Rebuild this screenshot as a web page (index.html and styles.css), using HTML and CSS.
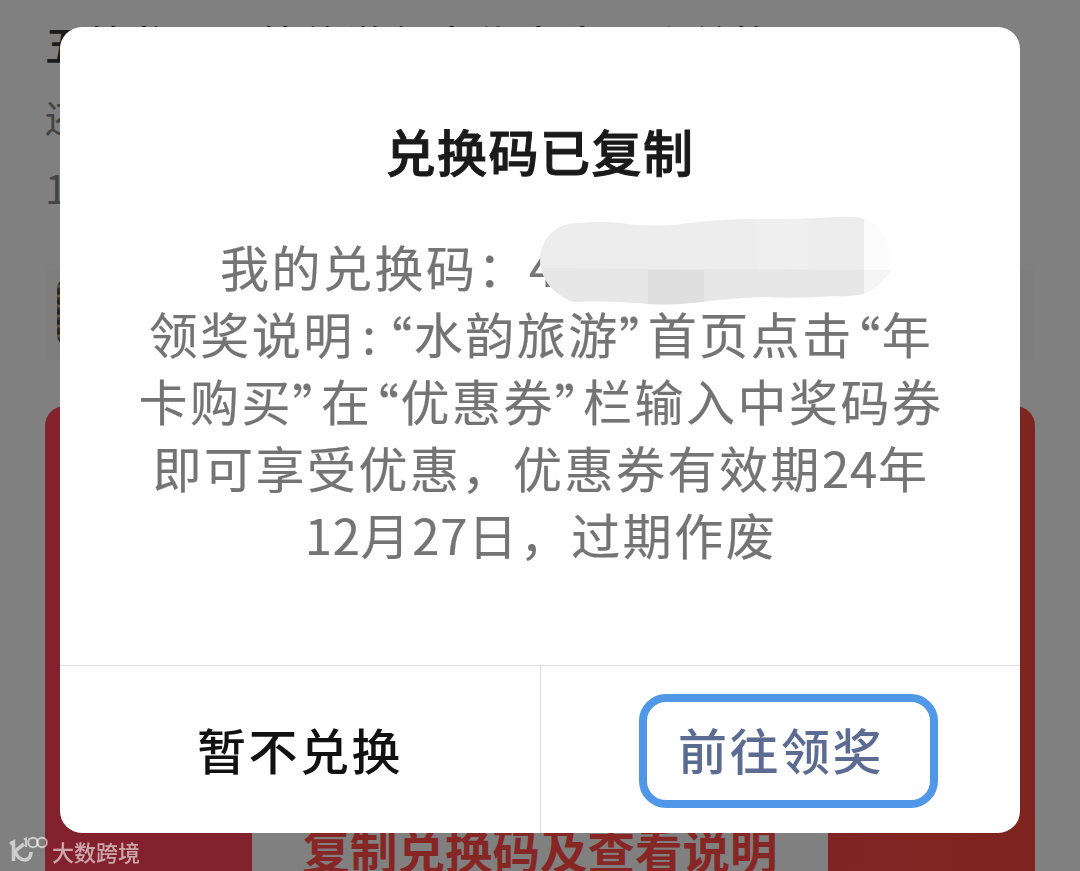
FILE: index.html
```html
<!DOCTYPE html>
<html lang="zh-CN">
<head>
  <meta charset="UTF-8" />
  <meta name="viewport" content="width=device-width, initial-scale=1.0"/>
  <title>兑换码已复制</title>
  <link rel="stylesheet" href="styles.css">
</head>
<body>
  <div class="page">
    <h1 class="prize-title">五等奖·八等旅游年卡优惠券一张兑换</h1>
    <p class="prize-info">还</p>
    <p class="prize-info count">1</p>
    <div class="sponsor"><span class="avatar"></span></div>
    <div class="banner">
      <div class="banner-panel"><span class="copy-text">复制兑换码及查看说明</span></div>
    </div>
  </div>

  <!-- Dialog -->
  <div class="overlay">
    <div class="modal">
      <div class="modal-body">
        <h2>兑换码已复制</h2>
        <div class="desc">
          <p class="code-line">我的兑换码：<span class="code">4</span>
            <svg class="smudge" width="360" height="95" viewBox="535 213 360 95">
              <path fill="#fcfcfc" d="M864 219Q884 226 888 246L890 270L864 272Z"/>
              <path fill="#f5f5f5" d="M864 270H891Q881 287 864 294Z"/>
              <path fill="#ededed" d="M540 262C540 240 554 222 580 223Q600 221 620 223Q650 227 675 225Q705 220 750 219Q790 220 820 218Q855 215 864 219V270H541Z"/>
              <path fill="#efefef" d="M758 219.500L808 218.500V270H758Z"/>
              <path fill="#e7e7e7" d="M541 268L864 270V294Q850 297 835 296Q800 299 760 297Q725 299 700 302Q665 306 635 303Q600 300 573 302C556 295 544 284 541 268Z"/>
              <path fill="#dfdfdf" d="M648 270H704V301.500Q670 306 648 303.500Z"/>
            </svg>
          </p>
          <p>领奖说明<span class="colon">:</span><span class="q left">“</span>水韵旅游<span class="q">”</span>首页点击<span class="q left">“</span>年</p>
          <p>卡购买<span class="q">”</span>在<span class="q left">“</span>优惠券<span class="q">”</span>栏输入中奖码券</p>
          <p>即可享受优惠，优惠券有效期<span class="num">24</span>年</p>
          <p><span class="num">12</span>月<span class="num">27</span>日，过期作废</p>
        </div>
      </div>
      <div class="buttons">
        <button class="cancel">暂不兑换</button>
        <button class="confirm"><span class="mark">前往领奖</span></button>
      </div>
    </div>
  </div>

  <div class="watermark">
    <svg width="40" height="28" viewBox="0 0 40 28" fill="none" stroke="currentColor">
      <path stroke-width="3.500" d="M1 8L4.500 6V25M15 8L6 15Q9 24 16 24Q22 23 22 16"/>
      <path stroke-width="2" d="M15 3.500L17 2.500V11"/>
      <circle cx="24" cy="6.500" r="4.800" stroke-width="2"/>
      <circle cx="33" cy="6.500" r="4.800" stroke-width="2"/>
    </svg>
    <span>大数跨境</span>
  </div>
</body>
</html>
```
FILE: styles.css
```css
* { box-sizing: border-box; margin: 0; padding: 0; }
body {
  height: 871px;
  overflow: hidden;
  background: #808080;
  font-family: "Noto Sans CJK SC", "Noto Sans", sans-serif;
}

.page { height: 871px; padding: 13px 45px 0; overflow: hidden; display: flex; flex-direction: column; }
.prize-title { height: 60px; line-height: 60px; font-size: 41px; font-weight: 500; letter-spacing: 2px; color: #1b1b1b; white-space: nowrap; overflow: hidden; }
.prize-info { height: 70px; padding-top: 9px; line-height: 70px; font-size: 37px; color: #444; }
.count { font-size: 40px; }
.sponsor { height: 90px; margin: 57px 0 46px; padding: 10px 12px; background: #7e7e7e; }
.avatar { display: block; width: 64px; height: 64px; border-radius: 8px; background: repeating-linear-gradient(#28231d 0 4px, #62543f 5px 7px, #37302a 8px 10px); }
.banner { flex: 1; border-radius: 20px 20px 0 0; background: linear-gradient(90deg, #83212f, #7e2520); padding: 0 207px; }
.banner-panel { height: 100%; display: flex; align-items: flex-end; justify-content: center; background: #808080; }
.copy-text { line-height: 44px; font-size: 47.500px; font-weight: bold; white-space: nowrap; color: #862725; }

.overlay { position: fixed; top: 0; left: 0; right: 0; bottom: 0; padding: 27px 60px 38px; display: flex; }
.modal { flex: 1; display: flex; flex-direction: column; background: #fefefe; border-radius: 22px; overflow: hidden; }
.modal-body { height: 638px; padding-top: 85px; text-align: center; }
.modal h2 { height: 76px; line-height: 76px; font-size: 50px; font-weight: 500; letter-spacing: 1.500px; color: #1a1a1a; -webkit-text-stroke: 1px #1a1a1a; }
.desc { margin-top: 44px; font-size: 49px; letter-spacing: 2.500px; line-height: 67px; color: #747474; -webkit-text-stroke: .2px #747474; }
.desc p { height: 67px; padding-left: 2px; white-space: nowrap; }
.desc .code-line { position: relative; padding-left: 160px; text-align: left; }
.smudge { position: absolute; left: 475px; top: -19px; -webkit-text-stroke: 0; }
.colon { display: inline-block; width: 31px; text-align: center; }
.q { display: inline-block; width: 28px; height: 67px; padding-top: 4px; vertical-align: top; letter-spacing: 0; text-align: left; font-feature-settings: "palt"; }
.q.left { padding-right: 2px; text-align: right; }
.num { letter-spacing: .800px; }

.buttons { flex: 1; display: flex; border-top: 1px solid #dedede; }
.buttons button { width: 50%; border: none; background: none; font-family: inherit; font-size: 49px; font-weight: 500; letter-spacing: 2.500px; cursor: pointer; }
.cancel { padding-bottom: 2px; color: #111; }
.buttons .confirm { border-left: 1px solid #dedede; color: #5b6b91; }
.mark { display: flex; align-items: center; justify-content: center; width: 299px; height: 114px; margin: 2px 0 0 98px; padding: 0 15px 4px 0; border: 8px solid #5097e7; border-radius: 27px; }

.watermark { position: absolute; left: 9px; top: 836px; display: flex; color: rgba(255, 255, 255, .6); font-size: 22px; line-height: 30px; font-weight: 500; }
.watermark span { margin-left: 3px; }
```
